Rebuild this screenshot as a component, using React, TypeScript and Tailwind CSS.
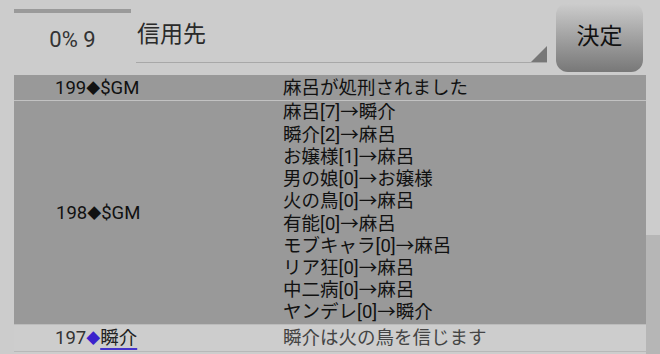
export default function App() {
  const font = { fontFamily: "Roboto, 'Noto Sans CJK JP', sans-serif" };
  const votes = [
    "麻呂[7]→瞬介",
    "瞬介[2]→麻呂",
    "お嬢様[1]→麻呂",
    "男の娘[0]→お嬢様",
    "火の鳥[0]→麻呂",
    "有能[0]→麻呂",
    "モブキャラ[0]→麻呂",
    "リア狂[0]→麻呂",
    "中二病[0]→麻呂",
    "ヤンデレ[0]→瞬介",
  ];
  const Dia = ({ c }: { c?: string }) => (
    <span className={`text-[14px] align-[1px] ${c ?? ""}`}>◆</span>
  );
  return (
    <div className="w-[660px] h-[354px] overflow-hidden bg-[#cccccc] flex flex-col" style={font}>
      <div className="h-[75px] flex shrink-0">
        <div className="ml-[14px] w-[117px] flex flex-col">
          <div className="mt-[9px] h-[4px] bg-[#9a9a9a]" />
          <div className="mt-[13px] text-center text-[22px] leading-[28px] text-[#333]">0% 9</div>
        </div>
        <div className="ml-[5px] w-[411px] h-[63px] relative border-b border-[#a8a8a8]">
          <div className="pl-[1px] pt-[20px] text-[23px] leading-[30px] text-[#2a2a2a]">信用先</div>
          <svg className="absolute right-0 bottom-0" width="16" height="16" viewBox="0 0 16 16">
            <polygon points="16,0 16,16 0,16" fill="#777777" />
          </svg>
        </div>
        <div className="ml-[9px] mt-[3px] w-[87px] h-[69px] rounded-[12px] bg-gradient-to-b from-[#cdcdcd] to-[#787878] flex items-center justify-center text-[23px] text-[#111]">
          決定
        </div>
      </div>
      <div className="flex flex-1 min-h-0">
        <div className="ml-[14px] w-[632px] flex flex-col text-[18.5px] text-[#111]">
          <div className="flex bg-[#999999] h-[25px] items-center">
            <div className="w-[269px] pl-[41px] leading-[22px]">199<Dia />$GM</div>
            <div className="leading-[22px]">麻呂が処刑されました</div>
          </div>
          <div className="h-[1px] bg-[#c2c2c2]" />
          <div className="flex bg-[#999999] h-[223px] items-center">
            <div className="w-[269px] pl-[42px] leading-[22px]">198<Dia />$GM</div>
            <div className="flex flex-col leading-[22.2px]">
              {votes.map((v) => (
                <div key={v}>{v}</div>
              ))}
            </div>
          </div>
          <div className="h-[1px] bg-[#bcbcbc]" />
          <div className="flex bg-[#cdcdcd] h-[26px] items-center">
            <div className="w-[269px] pl-[41px] leading-[22px] text-[#333]">
              197<Dia c="text-[#3a22cc]" />
              <span className="text-[#222] underline decoration-[#4433cc] decoration-2 underline-offset-[4px]">瞬介</span>
            </div>
            <div className="leading-[22px] text-[#444]">瞬介は火の鳥を信じます</div>
          </div>
          <div className="h-[1px] bg-[#b8b8b8]" />
          <div className="flex-1 bg-[#cdcdcd]" />
        </div>
        <div className="w-[14px] flex flex-col">
          <div className="h-[160px]" />
          <div className="flex-1 bg-[#b6b6b6]" />
        </div>
      </div>
    </div>
  );
}
